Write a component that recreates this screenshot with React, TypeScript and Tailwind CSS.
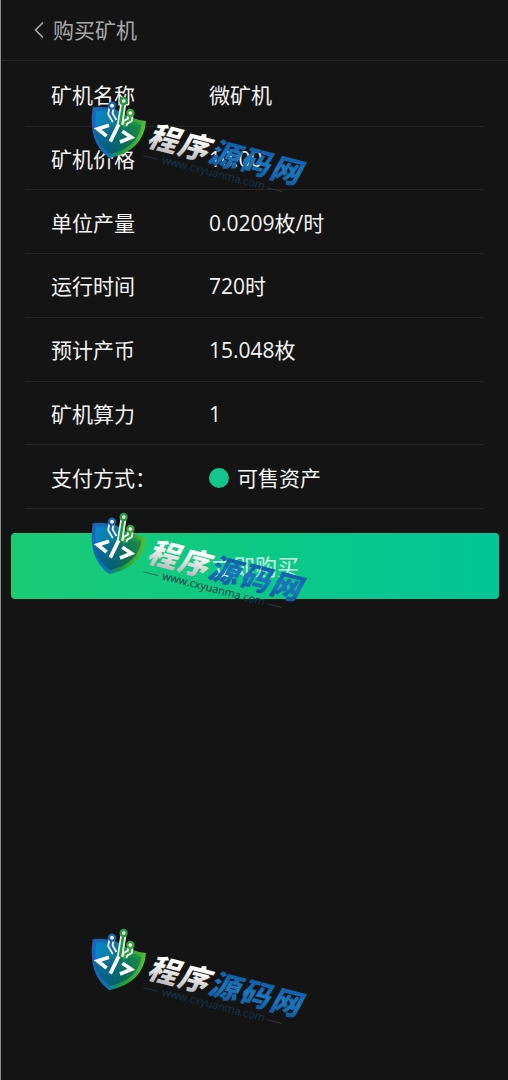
import { useId } from 'react';
import { ChevronLeft } from 'lucide-react';

const details = [
  { label: '矿机名称', value: '微矿机' },
  { label: '矿机价格', value: '10.00' },
  { label: '单位产量', value: '0.0209枚/时' },
  { label: '运行时间', value: '720时' },
  { label: '预计产币', value: '15.048枚' },
  { label: '矿机算力', value: '1' },
];

function Watermark() {
  const id = useId();

  return (
    <svg viewBox="0 0 720 345" className="block h-[115px] w-[240px]" aria-hidden="true">
      <defs>
        <linearGradient id={`${id}-edge`} x1="0" y1="0.3" x2="1" y2="0.5">
          <stop offset="0" stopColor="#1a62b8" />
          <stop offset="0.4" stopColor="#0f72b4" />
          <stop offset="0.65" stopColor="#1f9a3c" />
          <stop offset="1" stopColor="#5fc02e" />
        </linearGradient>
        <linearGradient id={`${id}-face`} x1="0" y1="0.2" x2="1" y2="0.4">
          <stop offset="0" stopColor="#0a86c8" />
          <stop offset="0.45" stopColor="#087a92" />
          <stop offset="0.75" stopColor="#12904a" />
          <stop offset="1" stopColor="#2fa63a" />
        </linearGradient>
        <linearGradient id={`${id}-shade`} x1="0" y1="0" x2="0" y2="1">
          <stop offset="0" stopColor="#034a6a" stopOpacity="0.25" />
          <stop offset="1" stopColor="#034a5c" stopOpacity="0.6" />
        </linearGradient>
        <linearGradient id={`${id}-silver`} x1="0" y1="0" x2="0" y2="1">
          <stop offset="0.35" stopColor="#ffffff" />
          <stop offset="0.9" stopColor="#b4b4b4" />
        </linearGradient>
        <linearGradient id={`${id}-blue`} x1="0" y1="0" x2="0" y2="1">
          <stop offset="0.2" stopColor="#0e5aa6" />
          <stop offset="0.55" stopColor="#1b78bf" />
          <stop offset="1" stopColor="#0b4f94" />
        </linearGradient>
      </defs>

      {/* shield */}
      <path
        d="M38 67Q75 62 110 74Q150 102 198 108Q192 196 88 220Q22 172 38 67Z"
        fill={`url(#${id}-edge)`}
      />
      <path
        d="M48 77Q80 74 108 84Q144 108 185 116Q176 186 91 207Q36 164 48 77Z"
        fill={`url(#${id}-face)`}
      />
      <path
        d="M44 132Q110 118 184 120Q176 186 91 207Q49 178 44 132Z"
        fill={`url(#${id}-shade)`}
      />

      {/* circuit branches */}
      <g fill="none" strokeLinejoin="round">
        <g stroke="#f4faf6" strokeWidth="18">
          <path d="M95 68L91 86L104 108" />
          <path d="M130 56L120 118" />
          <path d="M151 92L150 104L136 112L133 122" />
        </g>
        <path d="M95 66L91 86L107 114" stroke="#1768b0" strokeWidth="7" />
        <path d="M130 54L119 124" stroke="#259b3c" strokeWidth="8" />
        <path d="M151 90L150 104L136 112L132 128" stroke="#2fa33c" strokeWidth="7" />
      </g>
      <circle cx="96" cy="62" r="9" fill="#fff" stroke="#1b66b2" strokeWidth="7" />
      <circle cx="131" cy="48" r="9" fill="#fff" stroke="#259b3c" strokeWidth="7" />
      <circle cx="151" cy="84" r="9" fill="#fff" stroke="#3aa83a" strokeWidth="7" />

      <g fill="none" stroke="#fff" strokeWidth="11">
        <path d="M87 121L53 132L80 153" />
        <path d="M116 118L91 170" />
        <path d="M127 139L154 157L120 171" />
      </g>

      {/* site name and address */}
      <g transform="rotate(14.5 200 190)" fontFamily="'Noto Sans CJK SC', sans-serif">
        <g fontWeight="900" fontStyle="italic" fontSize="90">
          <text x="195" y="182" fill={`url(#${id}-silver)`}>
            程
          </text>
          <text x="290" y="182" fill={`url(#${id}-silver)`}>
            序
          </text>
          <text x="385" y="182" fill={`url(#${id}-blue)`}>
            源
          </text>
          <text x="480" y="182" fill={`url(#${id}-blue)`}>
            码
          </text>
          <text x="575" y="182" fill={`url(#${id}-blue)`}>
            网
          </text>
        </g>
        <g fill="none" stroke="#2b4152" strokeWidth="2">
          <path d="M196 214H242" />
          <path d="M580 214H626" />
        </g>
        <text
          x="254"
          y="222"
          fontSize="33"
          fontFamily="'Open Sans', sans-serif"
          fontWeight="500"
          fill="#19344a"
        >
          www.cxyuanma.com
        </text>
      </g>
    </svg>
  );
}

export default function App() {
  return (
    <div className="relative min-h-screen overflow-hidden border-l border-[#8b9090] bg-[#141414] font-['Open_Sans','Noto_Sans_CJK_SC',sans-serif] text-[21px] leading-8 text-[#f4f4f4]">
      <header className="border-b border-[#2a2a2a] pt-3.5 pb-3.5 pl-6">
        <a href="#back" className="flex items-center text-[#a9a9a9]">
          <ChevronLeft size={28} strokeWidth={1.5} />
          <h1>购买矿机</h1>
        </a>
      </header>

      <form onSubmit={(e) => e.preventDefault()}>
        <dl className="mx-6 grid h-[448px] auto-rows-fr pt-0.5">
          {details.map((row) => (
            <div key={row.label} className="flex items-center border-b border-[#252525] pl-[26px] pt-0.5">
              <dt className="w-[158px]">{row.label}</dt>
              <dd>{row.value}</dd>
            </div>
          ))}
          <div className="flex items-center border-b border-[#252525] pl-[26px] pt-0.5">
            <dt className="w-[158px]">支付方式：</dt>
            <dd>
              <label className="flex items-center gap-2">
                <input
                  type="radio"
                  name="payment"
                  defaultChecked
                  className="size-5 appearance-none rounded-full bg-[#13c68d]"
                />
                可售资产
              </label>
            </dd>
          </div>
        </dl>

        <div className="pt-6 pr-[9px] pl-2.5">
          <button
            type="submit"
            className="h-[66px] w-full rounded bg-linear-to-r from-[#1acb74] via-[#0bc985] to-[#04c596] text-[22px] text-[#cdf5e6]"
          >
            立即购买
          </button>
        </div>
      </form>

      <div className="pointer-events-none absolute left-[79px] top-[85px] flex flex-col gap-[301px]">
        <Watermark />
        <Watermark />
        <Watermark />
      </div>
    </div>
  );
}
